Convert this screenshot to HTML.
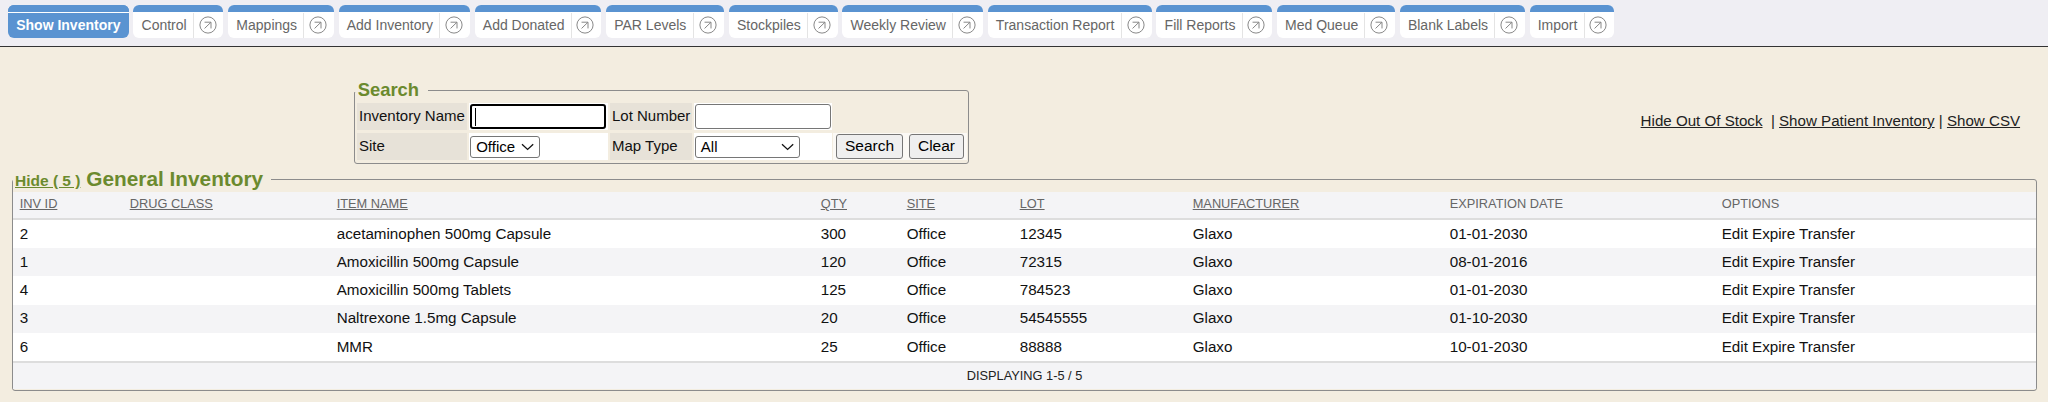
<!DOCTYPE html>
<html><head><meta charset="utf-8">
<style>
*{box-sizing:border-box;}
html,body{margin:0;padding:0;}
body{width:2048px;height:402px;overflow:hidden;background:#f3ede0;font-family:"Liberation Sans",sans-serif;position:relative;}
#nav{position:absolute;left:0;top:0;width:2048px;height:47px;background:#efeef3;border-bottom:1px solid #333;}
.tab{position:absolute;top:5px;height:33px;border-radius:6px;background:#fff;overflow:hidden;}
.tab .bar{position:absolute;left:0;top:0;right:0;height:7px;background:#5a93d1;}
.tab .lbl{position:absolute;left:8.2px;top:11.6px;font-size:14px;color:#666;white-space:nowrap;line-height:16px;}
.tab .dv{position:absolute;top:8px;bottom:0;width:1px;background:#e4e4e4;}
.tab .ic{position:absolute;top:10px;width:20px;height:20px;}
.tab .ic svg{display:block;}
.tab.act{background:#5a93d1;}
.tab.act .bar{border-bottom:1px solid #fff;height:8px;}
.tab.act .lbl{color:#fff;font-weight:bold;}

#sfs{position:absolute;left:354px;top:90px;width:615px;height:74px;border:1px solid #8c8c8c;border-radius:3px;}
#slg{position:absolute;left:353.5px;top:78.5px;width:74.5px;height:13.4px;padding-left:4.2px;background:#f3ede0;font-size:18.4px;font-weight:bold;color:#6b8a2e;line-height:22px;}
.lab{position:absolute;background:#e7e2d8;font-size:15px;color:#111;line-height:18px;padding-left:2px;}
.lab span{position:relative;}
.cell{position:absolute;background:#fff;}
input.t{position:absolute;height:25px;border:1px solid #767676;border-radius:3px;background:#fff;padding:0;}
.sel{position:absolute;height:22px;border:1px solid #767676;border-radius:3px;background:#fff;font-size:15px;line-height:20px;padding-left:5px;color:#000;}
.sel svg{position:absolute;right:5px;top:6px;}
.btn{position:absolute;height:24.4px;border:1px solid #767676;border-radius:3px;background:#efefef;font-size:15.5px;line-height:21.4px;text-align:center;color:#000;}

#links{position:absolute;left:1640.6px;top:112px;font-size:15.13px;color:#222;white-space:nowrap;line-height:18px;}
#links a{color:#222;text-decoration:underline;}

#gfs{position:absolute;left:12px;top:179px;width:2025px;height:211.5px;border:1px solid #8c8c8c;border-radius:3px;}
#glg{position:absolute;left:13px;top:167.1px;height:23.5px;padding:0 7.4px 0 2px;background:#f3ede0;white-space:nowrap;line-height:24px;}
#glg a{font-size:15.5px;font-weight:bold;color:#6b8a2e;text-decoration:underline;}
#glg span{margin-left:1.4px;font-size:20.8px;font-weight:bold;color:#6b8a2e;}
#tbl{position:absolute;left:0px;top:11.5px;right:0px;bottom:1px;background:#f4f4f6;}
.thead{position:absolute;left:0;right:0;top:0;height:28.3px;border-bottom:2px solid #ddd;}
.th{position:absolute;top:4.8px;font-size:12.8px;color:#666;line-height:15px;white-space:nowrap;}
.th.u{text-decoration:underline;}
.tr{position:absolute;left:0;right:0;height:28.25px;}
.td{position:absolute;top:4.8px;font-size:15.2px;color:#111;line-height:18px;white-space:nowrap;}
.tfoot{position:absolute;left:0;right:0;top:169.5px;bottom:0;border-top:2px solid #ddd;font-size:12.8px;color:#222;text-align:center;line-height:25.5px;}
</style></head><body>
<div id="nav">
<div class="tab act" style="left:8.00px;width:120.61px"><div class="bar"></div><div class="lbl">Show Inventory</div></div><div class="tab" style="left:133.37px;width:90.04px"><div class="bar"></div><div class="lbl">Control</div><div class="dv" style="left:59.44px"></div><div class="ic" style="left:64.24px"><svg width="20" height="20" viewBox="0 0 20 20"><circle cx="10" cy="10" r="8.1" fill="none" stroke="#888" stroke-width="1"/><path d="M6.55 7.2 H13 V13.45 M6.55 13.45 L13 7.2" fill="none" stroke="#888" stroke-width="1"/></svg></div></div><div class="tab" style="left:228.18px;width:105.61px"><div class="bar"></div><div class="lbl">Mappings</div><div class="dv" style="left:75.01px"></div><div class="ic" style="left:79.81px"><svg width="20" height="20" viewBox="0 0 20 20"><circle cx="10" cy="10" r="8.1" fill="none" stroke="#888" stroke-width="1"/><path d="M6.55 7.2 H13 V13.45 M6.55 13.45 L13 7.2" fill="none" stroke="#888" stroke-width="1"/></svg></div></div><div class="tab" style="left:338.56px;width:131.29px"><div class="bar"></div><div class="lbl">Add Inventory</div><div class="dv" style="left:100.69px"></div><div class="ic" style="left:105.49px"><svg width="20" height="20" viewBox="0 0 20 20"><circle cx="10" cy="10" r="8.1" fill="none" stroke="#888" stroke-width="1"/><path d="M6.55 7.2 H13 V13.45 M6.55 13.45 L13 7.2" fill="none" stroke="#888" stroke-width="1"/></svg></div></div><div class="tab" style="left:474.62px;width:126.64px"><div class="bar"></div><div class="lbl">Add Donated</div><div class="dv" style="left:96.04px"></div><div class="ic" style="left:100.84px"><svg width="20" height="20" viewBox="0 0 20 20"><circle cx="10" cy="10" r="8.1" fill="none" stroke="#888" stroke-width="1"/><path d="M6.55 7.2 H13 V13.45 M6.55 13.45 L13 7.2" fill="none" stroke="#888" stroke-width="1"/></svg></div></div><div class="tab" style="left:606.02px;width:118.05px"><div class="bar"></div><div class="lbl">PAR Levels</div><div class="dv" style="left:87.45px"></div><div class="ic" style="left:92.25px"><svg width="20" height="20" viewBox="0 0 20 20"><circle cx="10" cy="10" r="8.1" fill="none" stroke="#888" stroke-width="1"/><path d="M6.55 7.2 H13 V13.45 M6.55 13.45 L13 7.2" fill="none" stroke="#888" stroke-width="1"/></svg></div></div><div class="tab" style="left:728.84px;width:108.72px"><div class="bar"></div><div class="lbl">Stockpiles</div><div class="dv" style="left:78.12px"></div><div class="ic" style="left:82.92px"><svg width="20" height="20" viewBox="0 0 20 20"><circle cx="10" cy="10" r="8.1" fill="none" stroke="#888" stroke-width="1"/><path d="M6.55 7.2 H13 V13.45 M6.55 13.45 L13 7.2" fill="none" stroke="#888" stroke-width="1"/></svg></div></div><div class="tab" style="left:842.32px;width:140.60px"><div class="bar"></div><div class="lbl">Weekly Review</div><div class="dv" style="left:110.00px"></div><div class="ic" style="left:114.80px"><svg width="20" height="20" viewBox="0 0 20 20"><circle cx="10" cy="10" r="8.1" fill="none" stroke="#888" stroke-width="1"/><path d="M6.55 7.2 H13 V13.45 M6.55 13.45 L13 7.2" fill="none" stroke="#888" stroke-width="1"/></svg></div></div><div class="tab" style="left:987.68px;width:163.96px"><div class="bar"></div><div class="lbl">Transaction Report</div><div class="dv" style="left:133.36px"></div><div class="ic" style="left:138.16px"><svg width="20" height="20" viewBox="0 0 20 20"><circle cx="10" cy="10" r="8.1" fill="none" stroke="#888" stroke-width="1"/><path d="M6.55 7.2 H13 V13.45 M6.55 13.45 L13 7.2" fill="none" stroke="#888" stroke-width="1"/></svg></div></div><div class="tab" style="left:1156.41px;width:115.70px"><div class="bar"></div><div class="lbl">Fill Reports</div><div class="dv" style="left:85.10px"></div><div class="ic" style="left:89.90px"><svg width="20" height="20" viewBox="0 0 20 20"><circle cx="10" cy="10" r="8.1" fill="none" stroke="#888" stroke-width="1"/><path d="M6.55 7.2 H13 V13.45 M6.55 13.45 L13 7.2" fill="none" stroke="#888" stroke-width="1"/></svg></div></div><div class="tab" style="left:1276.88px;width:118.07px"><div class="bar"></div><div class="lbl">Med Queue</div><div class="dv" style="left:87.47px"></div><div class="ic" style="left:92.27px"><svg width="20" height="20" viewBox="0 0 20 20"><circle cx="10" cy="10" r="8.1" fill="none" stroke="#888" stroke-width="1"/><path d="M6.55 7.2 H13 V13.45 M6.55 13.45 L13 7.2" fill="none" stroke="#888" stroke-width="1"/></svg></div></div><div class="tab" style="left:1399.71px;width:125.07px"><div class="bar"></div><div class="lbl">Blank Labels</div><div class="dv" style="left:94.47px"></div><div class="ic" style="left:99.27px"><svg width="20" height="20" viewBox="0 0 20 20"><circle cx="10" cy="10" r="8.1" fill="none" stroke="#888" stroke-width="1"/><path d="M6.55 7.2 H13 V13.45 M6.55 13.45 L13 7.2" fill="none" stroke="#888" stroke-width="1"/></svg></div></div><div class="tab" style="left:1529.55px;width:84.58px"><div class="bar"></div><div class="lbl">Import</div><div class="dv" style="left:53.98px"></div><div class="ic" style="left:58.78px"><svg width="20" height="20" viewBox="0 0 20 20"><circle cx="10" cy="10" r="8.1" fill="none" stroke="#888" stroke-width="1"/><path d="M6.55 7.2 H13 V13.45 M6.55 13.45 L13 7.2" fill="none" stroke="#888" stroke-width="1"/></svg></div></div>
</div>

<div id="sfs"></div>
<div id="slg">Search</div>
<div class="lab" style="left:357px;top:103px;width:110px;height:26.7px;line-height:26px">Inventory Name</div>
<div class="cell" style="left:468.5px;top:103px;width:139px;height:26.7px"></div>
<input class="t" style="left:469.8px;top:104px;width:136.2px;border:2px solid #000">
<div style="position:absolute;left:474.6px;top:108px;width:1px;height:17.5px;background:#000"></div>
<div class="lab" style="left:610px;top:103px;width:81.5px;height:26.7px;line-height:26px">Lot Number</div>
<div class="cell" style="left:693.8px;top:103px;width:138px;height:26.7px"></div>
<input class="t" style="left:694.5px;top:104px;width:136px">

<div class="lab" style="left:357px;top:133px;width:110px;height:26.7px;line-height:26.2px">Site</div>
<div class="cell" style="left:468.5px;top:133px;width:139px;height:26.7px"></div>
<div class="sel" style="left:470.2px;top:135.8px;width:70.3px;height:22px">Office<svg width="13" height="8" viewBox="0 0 13 8"><path d="M1 1.2 L6.6 6.4 L12.2 1.2" fill="none" stroke="#111" stroke-width="1.3"/></svg></div>
<div class="lab" style="left:610px;top:133px;width:81.5px;height:26.7px;line-height:26.2px">Map Type</div>
<div class="cell" style="left:693.8px;top:133px;width:138px;height:26.7px"></div>
<div class="sel" style="left:694.8px;top:135.8px;width:104.9px;height:22px">All<svg width="13" height="8" viewBox="0 0 13 8"><path d="M1 1.2 L6.6 6.4 L12.2 1.2" fill="none" stroke="#111" stroke-width="1.3"/></svg></div>
<div class="cell" style="left:832.5px;top:132.8px;width:134px;height:27px;background:#fbf9f5"></div>
<div class="btn" style="left:836.3px;top:134.3px;width:66.4px">Search</div>
<div class="btn" style="left:909px;top:134.3px;width:55px">Clear</div>

<div id="links"><a>Hide Out Of Stock</a> &nbsp;| <a>Show Patient Inventory</a> | <a>Show CSV</a></div>

<div id="gfs">
 <div id="tbl">
  <div class="thead"><div class="th u" style="left:6.699999999999999px">INV ID</div><div class="th u" style="left:116.7px">DRUG CLASS</div><div class="th u" style="left:323.7px">ITEM NAME</div><div class="th u" style="left:807.7px">QTY</div><div class="th u" style="left:893.7px">SITE</div><div class="th u" style="left:1006.7px">LOT</div><div class="th u" style="left:1179.7px">MANUFACTURER</div><div class="th" style="left:1436.7px">EXPIRATION DATE</div><div class="th" style="left:1708.7px">OPTIONS</div></div>
  <div class="tr" style="top:28.30px;background:#fff"><div class="td" style="left:6.699999999999999px">2</div><div class="td" style="left:323.7px">acetaminophen 500mg Capsule</div><div class="td" style="left:807.7px">300</div><div class="td" style="left:893.7px">Office</div><div class="td" style="left:1006.7px">12345</div><div class="td" style="left:1179.7px">Glaxo</div><div class="td" style="left:1436.7px">01-01-2030</div><div class="td" style="left:1708.7px">Edit Expire Transfer</div></div><div class="tr" style="top:56.54px;background:#f4f4f6"><div class="td" style="left:6.699999999999999px">1</div><div class="td" style="left:323.7px">Amoxicillin 500mg Capsule</div><div class="td" style="left:807.7px">120</div><div class="td" style="left:893.7px">Office</div><div class="td" style="left:1006.7px">72315</div><div class="td" style="left:1179.7px">Glaxo</div><div class="td" style="left:1436.7px">08-01-2016</div><div class="td" style="left:1708.7px">Edit Expire Transfer</div></div><div class="tr" style="top:84.78px;background:#fff"><div class="td" style="left:6.699999999999999px">4</div><div class="td" style="left:323.7px">Amoxicillin 500mg Tablets</div><div class="td" style="left:807.7px">125</div><div class="td" style="left:893.7px">Office</div><div class="td" style="left:1006.7px">784523</div><div class="td" style="left:1179.7px">Glaxo</div><div class="td" style="left:1436.7px">01-01-2030</div><div class="td" style="left:1708.7px">Edit Expire Transfer</div></div><div class="tr" style="top:113.02px;background:#f4f4f6"><div class="td" style="left:6.699999999999999px">3</div><div class="td" style="left:323.7px">Naltrexone 1.5mg Capsule</div><div class="td" style="left:807.7px">20</div><div class="td" style="left:893.7px">Office</div><div class="td" style="left:1006.7px">54545555</div><div class="td" style="left:1179.7px">Glaxo</div><div class="td" style="left:1436.7px">01-10-2030</div><div class="td" style="left:1708.7px">Edit Expire Transfer</div></div><div class="tr" style="top:141.26px;background:#fff"><div class="td" style="left:6.699999999999999px">6</div><div class="td" style="left:323.7px">MMR</div><div class="td" style="left:807.7px">25</div><div class="td" style="left:893.7px">Office</div><div class="td" style="left:1006.7px">88888</div><div class="td" style="left:1179.7px">Glaxo</div><div class="td" style="left:1436.7px">10-01-2030</div><div class="td" style="left:1708.7px">Edit Expire Transfer</div></div>
  <div class="tfoot">DISPLAYING 1-5 / 5</div>
 </div>
</div>
<div id="glg"><a>Hide ( 5 )</a> <span>General Inventory</span></div>
</body></html>
